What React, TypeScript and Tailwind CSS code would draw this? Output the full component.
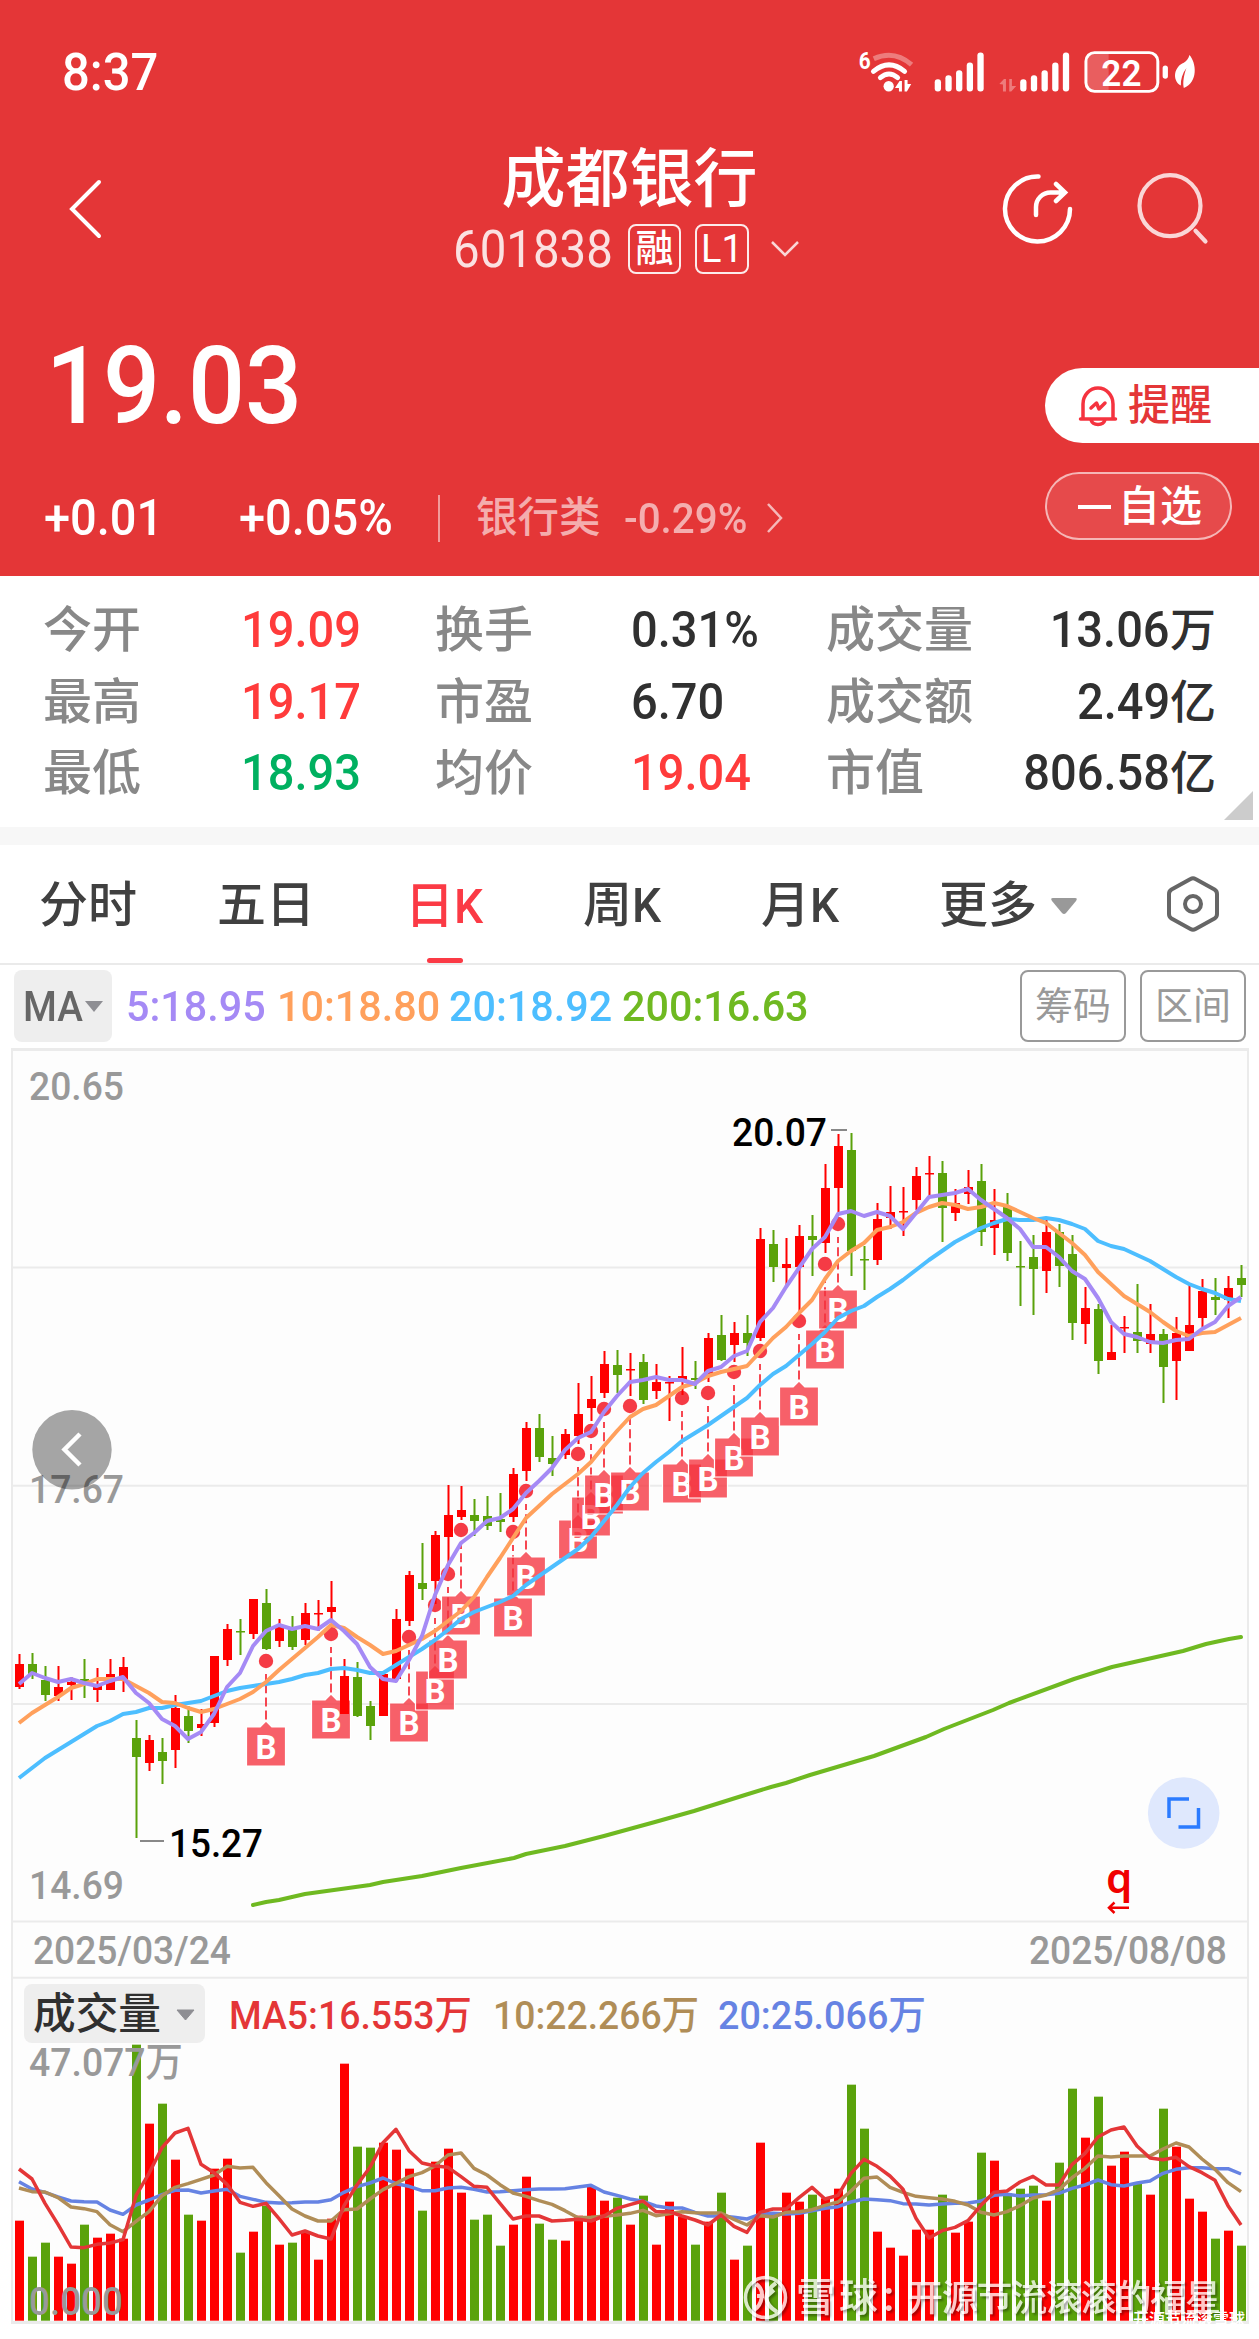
import { ReactNode } from "react";

const UP = "#ff0000";
const DOWN = "#5aa20b";

// direction, high, body top, body bottom, low
type Candle = [string, number, number, number, number];

const candles: Candle[] = [
  ["R", 1654, 1664, 1687, 1689], ["G", 1653, 1664, 1675, 1679], ["G", 1666, 1680, 1695, 1701],
  ["R", 1666, 1687, 1696, 1701], ["R", 1677, 1682, 1685, 1700], ["G", 1659, 1679, 1683, 1698],
  ["R", 1668, 1685, 1690, 1702], ["R", 1659, 1674, 1690, 1690], ["R", 1657, 1667, 1681, 1692],
  ["G", 1720, 1738, 1757, 1838], ["R", 1735, 1740, 1763, 1771], ["G", 1738, 1752, 1761, 1784],
  ["R", 1695, 1708, 1750, 1768], ["G", 1706, 1716, 1731, 1743], ["R", 1709, 1724, 1728, 1736],
  ["R", 1656, 1656, 1723, 1727], ["R", 1624, 1629, 1660, 1666], ["G", 1619, 1631, 1631, 1655],
  ["R", 1599, 1599, 1634, 1639], ["G", 1589, 1603, 1649, 1650], ["R", 1619, 1627, 1641, 1647],
  ["G", 1616, 1629, 1647, 1650], ["R", 1603, 1613, 1640, 1645], ["R", 1600, 1613, 1613, 1631],
  ["R", 1581, 1607, 1612, 1620], ["R", 1659, 1676, 1714, 1714], ["G", 1662, 1677, 1716, 1717],
  ["G", 1701, 1706, 1726, 1740], ["R", 1674, 1674, 1716, 1716], ["R", 1609, 1619, 1679, 1682],
  ["R", 1571, 1575, 1621, 1626], ["G", 1543, 1583, 1589, 1600], ["R", 1531, 1535, 1581, 1604],
  ["R", 1485, 1515, 1537, 1568], ["R", 1486, 1510, 1517, 1520], ["G", 1499, 1515, 1521, 1536],
  ["G", 1496, 1516, 1526, 1530], ["G", 1493, 1519, 1522, 1532], ["R", 1468, 1474, 1517, 1522],
  ["R", 1422, 1428, 1471, 1481], ["G", 1414, 1428, 1457, 1462], ["G", 1436, 1458, 1464, 1476],
  ["R", 1429, 1434, 1455, 1459], ["R", 1383, 1414, 1436, 1444], ["R", 1376, 1399, 1408, 1421],
  ["R", 1351, 1364, 1393, 1398], ["G", 1350, 1365, 1375, 1393], ["R", 1353, 1369, 1369, 1396],
  ["G", 1354, 1362, 1400, 1404], ["R", 1364, 1382, 1391, 1399], ["R", 1376, 1382, 1382, 1421],
  ["R", 1347, 1376, 1380, 1395], ["G", 1361, 1378, 1380, 1389], ["R", 1333, 1338, 1375, 1382],
  ["G", 1315, 1335, 1360, 1361], ["R", 1322, 1333, 1345, 1362], ["G", 1315, 1333, 1343, 1356],
  ["R", 1228, 1239, 1338, 1341], ["G", 1230, 1244, 1267, 1282], ["R", 1238, 1264, 1268, 1285],
  ["R", 1225, 1236, 1267, 1314], ["G", 1215, 1236, 1240, 1276], ["R", 1164, 1188, 1243, 1253],
  ["R", 1134, 1146, 1188, 1215], ["G", 1133, 1150, 1251, 1276], ["G", 1246, 1259, 1259, 1290],
  ["R", 1203, 1219, 1260, 1265], ["R", 1186, 1212, 1218, 1229], ["R", 1187, 1211, 1211, 1236],
  ["R", 1167, 1176, 1200, 1210], ["R", 1156, 1173, 1173, 1197], ["G", 1161, 1173, 1208, 1242],
  ["R", 1189, 1203, 1213, 1221], ["R", 1170, 1187, 1194, 1204], ["G", 1164, 1181, 1232, 1246],
  ["R", 1189, 1220, 1228, 1255], ["G", 1193, 1206, 1253, 1261], ["G", 1241, 1266, 1266, 1306],
  ["G", 1235, 1257, 1269, 1315], ["R", 1220, 1232, 1271, 1293], ["G", 1224, 1232, 1266, 1287],
  ["G", 1235, 1254, 1323, 1340], ["R", 1287, 1308, 1324, 1344], ["G", 1304, 1309, 1361, 1374],
  ["R", 1325, 1352, 1360, 1360], ["R", 1316, 1327, 1327, 1353], ["G", 1284, 1332, 1341, 1353],
  ["R", 1304, 1334, 1344, 1353], ["G", 1329, 1334, 1367, 1403], ["R", 1317, 1333, 1361, 1400],
  ["R", 1284, 1325, 1351, 1351], ["R", 1279, 1291, 1318, 1327], ["G", 1278, 1297, 1300, 1315],
  ["R", 1276, 1288, 1300, 1318], ["G", 1265, 1278, 1285, 1297],
];

const ma5 = [
  1684, 1673, 1678, 1682, 1679, 1683, 1686, 1681, 1677, 1693, 1703, 1719, 1726, 1739, 1732, 1714, 1687, 1673, 1646,
  1631, 1625, 1629, 1626, 1629, 1620, 1631, 1644, 1667, 1679, 1681, 1660, 1636, 1595, 1565, 1543, 1533, 1521, 1518,
  1509, 1493, 1481, 1468, 1450, 1438, 1432, 1412, 1396, 1382, 1380, 1377, 1380, 1380, 1384, 1371, 1367, 1356, 1351,
  1322, 1308, 1287, 1268, 1249, 1237, 1214, 1211, 1216, 1212, 1216, 1229, 1213, 1197, 1195, 1193, 1189, 1200, 1209,
  1218, 1229, 1247, 1247, 1257, 1271, 1279, 1298, 1322, 1334, 1337, 1342, 1343, 1340, 1339, 1329, 1322, 1306, 1297,
];
const ma10 = [
  1723, 1713, 1705, 1697, 1688, 1684, 1679, 1679, 1679, 1686, 1693, 1702, 1703, 1708, 1712, 1709, 1704, 1699, 1692,
  1682, 1670, 1659, 1648, 1637, 1625, 1628, 1637, 1645, 1654, 1651, 1645, 1639, 1631, 1621, 1611, 1597, 1577, 1558,
  1538, 1518, 1506, 1494, 1484, 1474, 1462, 1446, 1431, 1417, 1409, 1405, 1396, 1387, 1383, 1376, 1372, 1369, 1366,
  1352, 1338, 1327, 1313, 1300, 1279, 1261, 1251, 1243, 1230, 1227, 1222, 1213, 1207, 1203, 1205, 1209, 1207, 1203,
  1206, 1212, 1218, 1223, 1233, 1243, 1255, 1272, 1284, 1296, 1304, 1312, 1322, 1331, 1336, 1333, 1332, 1325, 1318,
];
const ma20 = [
  1778, 1768, 1758, 1750, 1742, 1734, 1726, 1721, 1714, 1712, 1708, 1708, 1705, 1703, 1701, 1696, 1691, 1688, 1686,
  1684, 1682, 1679, 1675, 1673, 1669, 1668, 1670, 1673, 1673, 1665, 1657, 1649, 1640, 1630, 1619, 1612, 1607, 1602,
  1596, 1585, 1576, 1567, 1558, 1549, 1537, 1521, 1505, 1487, 1473, 1462, 1452, 1441, 1433, 1425, 1416, 1407, 1398,
  1385, 1374, 1366, 1355, 1344, 1332, 1318, 1311, 1306, 1297, 1289, 1280, 1270, 1260, 1251, 1242, 1235, 1228, 1223,
  1219, 1220, 1220, 1218, 1220, 1224, 1229, 1241, 1246, 1249, 1255, 1261, 1269, 1277, 1284, 1289, 1293, 1299, 1301,
];
const ma200 =
  "253,1905 266,1902 279,1900 305,1894 370,1885 383,1882 422,1876 461,1868 514,1858 526,1854 565,1846 604,1836 655,1822 694,1811 745,1795 771,1787 786,1783 810,1775 874,1756 926,1737 944,1729 993,1710 1009,1703 1074,1679 1112,1667 1183,1651 1206,1644 1229,1639 1241,1637";

// candle index, y of the buy dot
const buys = [
  [19, 1661], [24, 1634], [30, 1637], [32, 1605], [33, 1574], [34, 1530], [38, 1532], [39, 1491], [43, 1454],
  [44, 1431], [45, 1409], [47, 1406], [51, 1398], [53, 1393], [55, 1372], [57, 1351], [60, 1321], [62, 1264], [63, 1224],
];

// volume pane values are thirds of a pixel below y=1960
const volumes = [
  782, 890, 848, 890, 911, 794, 833, 821, 836, 254, 491, 431, 599, 764, 782, 626, 596, 878, 815, 738, 854, 848, 815,
  899, 776, 311, 560, 563, 548, 569, 626, 752, 605, 566, 698, 779, 764, 857, 794, 650, 791, 839, 842, 767, 680, 722,
  713, 794, 707, 854, 725, 770, 854, 785, 698, 899, 857, 548, 758, 698, 725, 704, 715, 686, 374, 506, 815, 863, 887,
  809, 809, 704, 818, 785, 578, 602, 700, 686, 677, 722, 608, 386, 533, 410, 617, 575, 668, 704, 446, 560, 716, 755,
  836, 812, 857,
];
const vol5 = [
  627, 657, 730, 793, 861, 863, 853, 849, 839, 707, 640, 563, 519, 505, 613, 638, 673, 727, 739, 730, 776, 825, 813,
  828, 837, 737, 675, 622, 548, 508, 572, 609, 618, 622, 650, 679, 682, 730, 777, 768, 768, 783, 781, 778, 783, 768,
  745, 734, 723, 755, 755, 768, 780, 795, 765, 799, 817, 757, 747, 747, 713, 682, 717, 706, 640, 598, 619, 648, 688,
  775, 834, 812, 802, 782, 736, 697, 693, 666, 649, 675, 675, 614, 580, 531, 510, 501, 558, 594, 599, 592, 620, 638,
  661, 737, 795,
];
const vol10 = [
  684, 695, 696, 713, 741, 746, 755, 794, 815, 784, 755, 707, 682, 671, 658, 645, 619, 624, 622, 668, 707, 747, 768,
  783, 783, 749, 747, 717, 689, 670, 650, 638, 618, 585, 579, 625, 645, 674, 699, 709, 722, 733, 752, 773, 772, 769,
  765, 760, 751, 767, 761, 755, 758, 759, 759, 778, 795, 767, 771, 757, 755, 749, 736, 726, 693, 655, 651, 682, 697,
  709, 713, 717, 724, 735, 757, 765, 755, 737, 714, 705, 689, 653, 625, 588, 591, 588, 588, 588, 567, 549, 561, 597,
  628, 668, 695,
];
const vol20 = [
  665, 687, 697, 711, 723, 725, 726, 750, 763, 735, 720, 704, 691, 690, 699, 693, 688, 709, 718, 727, 729, 728, 726,
  726, 719, 697, 680, 669, 654, 671, 679, 692, 692, 684, 682, 688, 696, 695, 692, 689, 687, 687, 686, 681, 676, 696,
  706, 717, 724, 738, 744, 744, 757, 768, 768, 772, 777, 763, 760, 762, 760, 752, 745, 740, 726, 717, 719, 722, 731,
  732, 735, 732, 730, 729, 723, 706, 703, 708, 705, 704, 700, 685, 675, 660, 674, 678, 669, 663, 640, 628, 623, 623,
  626, 626, 642,
];

const stats = [
  ["今开", "19.09", "text-[#ff3b3b]", "换手", "0.31%", "text-[#303030]", "成交量", "13.06", "万"],
  ["最高", "19.17", "text-[#ff3b3b]", "市盈", "6.70", "text-[#303030]", "成交额", "2.49", "亿"],
  ["最低", "18.93", "text-[#00b060]", "均价", "19.04", "text-[#ff3b3b]", "市值", "806.58", "亿"],
];

const xAt = (i: number) => 19 + i * 13;
const volY = (v: number) => 1960 + v / 3;
const pricePoints = (ys: number[]) => ys.map((y, i) => `${xAt(i)},${y}`).join(" ");
const volumePoints = (vs: number[]) => vs.map((v, i) => `${xAt(i)},${volY(v)}`).join(" ");

function StatusIcons() {
  const tops = [148, 136, 121, 97, 67];
  return (
    <svg width="367" height="53" viewBox="0 47.5 1100 160" fill="white">
      <text x="53" y="118" fontSize="74" fontWeight="700" textLength="36" lengthAdjust="spacingAndGlyphs">
        6
      </text>
      <g fill="none" stroke="white" strokeWidth="15" strokeLinecap="round">
        <path d="M98 86Q160 58 212 104" opacity="0.35" strokeLinecap="butt" />
        <path d="M97 124Q144 85 191 124" />
        <path d="M118 143Q144 121 170 143" />
      </g>
      <circle cx="143" cy="169" r="15.500" />
      <path d="M176 153L183 153V185H174V174H162ZM191 150H200V162H211L198 185H191Z" />
      <path d="M477 162L491 147H497V185H488V164ZM507 147H515V168H528L513 185H507Z" opacity="0.35" />
      {tops.map((top, i) => (
        <g key={top}>
          <rect x={282 + i * 32.2} y={top} width="19" height={185 - top} rx="9" />
          <rect x={540 + i * 32.2} y={top} width="19" height={185 - top} rx="9" />
        </g>
      ))}
      <path d="M742 90Q742 70 764 70H807V182H764Q742 182 742 162Z" opacity="0.2" />
      <rect x="738.500" y="67.500" width="217" height="117" rx="26" fill="none" stroke="white" strokeWidth="9" />
      <text x="785" y="168" fontSize="112" fontWeight="600" textLength="121" lengthAdjust="spacingAndGlyphs">
        22
      </text>
      <rect x="970" y="106" width="16" height="40" rx="8" />
      <path d="M1051 75C1072 98 1078 158 1034 174C1030 160 1034 134 1042 114C1030 130 1024 148 1025 167C996 150 1006 108 1034 98C1043 93 1048 86 1051 75Z" />
    </svg>
  );
}

function Header() {
  return (
    <header className="h-[576px] bg-[#e43637] text-white">
      <div className="flex h-[145px] items-center justify-between pr-[52px] pl-[62px]">
        <span className="origin-left scale-x-[0.96] pt-[2px] text-[51px]">8:37</span>
        <StatusIcons />
      </div>

      <div className="flex h-[145px]">
        <div className="w-[400px] pt-[34px] pl-[68px]">
          <svg width="36" height="60" viewBox="0 0 36 60" fill="none" stroke="white" strokeWidth="4" strokeLinecap="round">
            <path d="M31 3L4 30L31 57" />
          </svg>
        </div>
        <div className="flex flex-1 flex-col items-center">
          <h1 className="h-[66px] text-[64px] leading-[70px]">成都银行</h1>
          <div className="mt-[13px] mr-[5px] flex h-[50px] items-center">
            <span className="w-[158px] pt-[2px] text-white/85">
              <span className="inline-block origin-left scale-x-[0.93] text-[51px] leading-[50px] font-normal">601838</span>
            </span>
            <span className="ml-[17px] flex h-[50px] w-[53px] items-center justify-center rounded-lg border-2 border-white/90 pb-[2px] text-[38px]">
              融
            </span>
            <span className="ml-[14px] flex h-[50px] w-[54px] items-center justify-center rounded-lg border-2 border-white/90 text-[38px] font-normal">
              L1
            </span>
            <svg className="ml-[20px]" width="32" height="20" viewBox="0 0 32 20" fill="none" stroke="white" strokeOpacity="0.8" strokeWidth="2.500">
              <path d="M3 3L16 16L29 3" />
            </svg>
          </div>
        </div>
        <div className="flex w-[400px] gap-[60px] pt-[26px] pl-[142px]">
          <svg width="75" height="75" viewBox="-37 -37 75 75" fill="none" stroke="white" strokeWidth="4.500" strokeLinecap="round">
            <path d="M0.500 -31.500A32.500 32.500 0 1 0 32 1M-2 7V-1A14.500 14.500 0 0 1 12.500 -15.500H26M18 -24L27 -15.500L18 -7" />
          </svg>
          <svg width="75" height="75" viewBox="0 0 75 75" fill="none" stroke="white" strokeOpacity="0.8" strokeWidth="4.200" strokeLinecap="round">
            <circle cx="34" cy="34.700" r="30.500" />
            <path d="M59.500 59.700L69.500 70.500" />
          </svg>
        </div>
      </div>

      <div className="flex justify-between">
        <div className="pt-[46px] pl-[44px]">
          <p className="origin-left scale-x-[0.93] pl-[2px] text-[108px] leading-[100px]">19.03</p>
          <div className="mt-[57px] flex h-[50px] items-center">
            <span className="w-[195px]">
              <span className="inline-block origin-left scale-x-[0.94] text-[50px]">+0.01</span>
            </span>
            <span className="w-[199px]">
              <span className="inline-block origin-left scale-x-[0.94] text-[50px]">+0.05%</span>
            </span>
            <span className="h-[47px] w-[2px] bg-white/50" />
            <span className="ml-[36px] text-[41.500px] text-white/60">银行类</span>
            <span className="ml-[23px] w-[141px] text-white/60">
              <span className="inline-block origin-left scale-x-[0.96] text-[42px]">-0.29%</span>
            </span>
            <svg width="20" height="32" viewBox="0 0 20 32" fill="none" stroke="white" strokeOpacity="0.65" strokeWidth="2.500">
              <path d="M3 2L16 16L3 30" />
            </svg>
          </div>
        </div>
        <div className="flex w-[214px] flex-col gap-[29px] pt-[78px]">
          <button className="flex h-[75px] items-center rounded-l-full bg-white pl-[33px] text-[#e43637]">
            <svg width="40" height="42" viewBox="0 0 40 42" fill="none" stroke="#f5333f" strokeWidth="3.500" strokeLinejoin="round" strokeLinecap="round">
              <path d="M2.500 34H37.500M5 33V19A15 16 0 0 1 35 19V33M13 35C15 41 25 41 27 35M13 23L18.500 18L21 24L27 18" />
            </svg>
            <span className="ml-[10px] text-[42px]">提醒</span>
          </button>
          <button className="flex h-[68px] w-[187px] items-center rounded-full border-2 border-white/60 bg-white/10 pl-[31px]">
            <span className="mt-[2px] h-[4px] w-[33px] bg-white" />
            <span className="ml-[7px] text-[42px]">自选</span>
          </button>
        </div>
      </div>
    </header>
  );
}

function Num({ children }: { children: ReactNode }) {
  return <span className="inline-block origin-left scale-x-[0.94]">{children}</span>;
}

function Stats() {
  return (
    <section className="relative h-[251px] bg-white pt-[19px]">
      {stats.map(([l1, v1, c1, l2, v2, c2, l3, v3, unit]) => (
        <div
          key={l1}
          className="grid h-[71.500px] grid-cols-[198px_194px_196px_195px_auto_1fr] items-center pr-[43px] pl-[43px] text-[50px] leading-[71px] text-[#303030]"
        >
          <span className="text-[49px] text-[#888]">{l1}</span>
          <span className={c1}>
            <Num>{v1}</Num>
          </span>
          <span className="text-[49px] text-[#888]">{l2}</span>
          <span className={c2}>
            <Num>{v2}</Num>
          </span>
          <span className="text-[49px] whitespace-nowrap text-[#888]">{l3}</span>
          <span className="flex items-center justify-end">
            <span className="origin-right scale-x-[0.94]">{v3}</span>
            <span className="text-[46px]">{unit}</span>
          </span>
        </div>
      ))}
      <svg className="absolute right-[6px] bottom-[7px]" width="29" height="29" viewBox="0 0 29 29">
        <path d="M29 0V29H0Z" fill="#ccc" />
      </svg>
    </section>
  );
}

function Tabs() {
  return (
    <nav className="flex h-[120px] items-center border-b-2 border-[#eaeaea] bg-white pl-[39px] text-[49px] text-[#404040]">
      <span className="w-[178px] pt-1">分时</span>
      <span className="w-[188px] pt-1">五日</span>
      <span className="flex h-full w-[178px] flex-col justify-between text-[#fb3a45]">
        <span className="pt-[25px]">
          日<Num>K</Num>
        </span>
        <span className="ml-[22px] h-[5px] w-[36px] rounded-full bg-[#fb3a45]" />
      </span>
      <span className="w-[178px] pt-1">
        周<Num>K</Num>
      </span>
      <span className="w-[178px] pt-1">
        月<Num>K</Num>
      </span>
      <span className="pt-1">更多</span>
      <svg className="mt-1 ml-[14px]" width="26" height="16" viewBox="0 0 26 16">
        <path d="M2 0H24Q27 0 25 3L15 15Q13 17 11 15L1 3Q-1 0 2 0Z" fill="#999" />
      </svg>
      <svg className="ml-[90px]" width="52" height="56" viewBox="0 0 52 56" fill="none" stroke="#666" strokeWidth="4" strokeLinejoin="round">
        <path d="M23.500 3Q26 1.500 28.500 3L47.500 13.500Q50 15 50 18V38Q50 41 47.500 42.500L28.500 53Q26 54.500 23.500 53L4.500 42.500Q2 41 2 38V18Q2 15 4.500 13.500Z" />
        <circle cx="26" cy="28" r="8" />
      </svg>
    </nav>
  );
}

function MaBar() {
  return (
    <div className="flex h-[80px] items-center bg-white pt-[2px] pr-[13px] pl-[14px] text-[43px]">
      <span className="flex h-[72px] w-[98px] items-center rounded-lg bg-[#eee] pl-[9px] text-[#666]">
        <span className="w-[62px]">
          <span className="inline-block origin-left scale-x-[0.9]">MA</span>
        </span>
        <svg width="18" height="11" viewBox="0 0 18 11">
          <path d="M0 0H18L9 11Z" fill="#8e8e93" />
        </svg>
      </span>
      <span className="ml-[14px] w-[151px] text-[#a58af5]">
        <span className="inline-block origin-left scale-x-[0.96]">5:18.95</span>
      </span>
      <span className="w-[172px] text-[#ffa05c]">
        <span className="inline-block origin-left scale-x-[0.96]">10:18.80</span>
      </span>
      <span className="w-[173px] text-[#4dbeff]">
        <span className="inline-block origin-left scale-x-[0.96]">20:18.92</span>
      </span>
      <span className="flex-1 text-[#6fb921]">
        <span className="inline-block origin-left scale-x-[0.96]">200:16.63</span>
      </span>
      <button className="h-[72px] w-[106px] rounded-lg border-2 border-[#999] text-[38px] font-normal text-[#999]">筹码</button>
      <button className="ml-[14px] h-[72px] w-[106px] rounded-lg border-2 border-[#999] text-[38px] font-normal text-[#999]">
        区间
      </button>
    </div>
  );
}

function Label({ x, y, w, fill = "#999", size = 39.5, children }: { x: number; y: number; w: number; fill?: string; size?: number; children: string }) {
  return (
    <text x={x} y={y} fill={fill} fontSize={size} textLength={w} lengthAdjust="spacingAndGlyphs">
      {children}
    </text>
  );
}

function Chart() {
  return (
    <svg className="block" width="1259" height="1294" viewBox="0 1045 1259 1294">
      <rect x="12" y="1049" width="1236" height="1273" fill="#fdfdfd" stroke="#ebebeb" strokeWidth="2" />
      <path d="M11 1049.500H1249M11 2322.500H1249" stroke="#ebebeb" strokeWidth="3" />
      <path d="M12 1267.500H1248M12 1485.700H1248M12 1704H1248M12 1921.500H1248M12 1977.700H1248" stroke="#ebebeb" strokeWidth="2" />

      <Label x={29} y={1100} w={95}>20.65</Label>
      <Label x={29} y={1503} w={95}>17.67</Label>
      <Label x={29} y={1899} w={95}>14.69</Label>
      <Label x={33} y={1964} w={198}>2025/03/24</Label>
      <Label x={1029} y={1964} w={198}>2025/08/08</Label>

      {buys.map(([i, y]) => (
        <g key={i} transform={`translate(${xAt(i)} ${y})`}>
          <path d="M0 13V60" stroke="#f5333f" strokeWidth="1.800" strokeDasharray="9 4.200" strokeDashoffset="3" />
          <path d="M-19.500 66H-6L0 60L6 66H19.500V105H-19.500Z" fill="#f5333f" fillOpacity="0.78" stroke="white" strokeWidth="1.200" strokeLinejoin="round" />
          <text x="0" y="97.500" textAnchor="middle" fontSize="33" fontWeight="700" fill="white">
            B
          </text>
          <circle r="7.200" fill="#f53b45" />
        </g>
      ))}

      {candles.map(([dir, high, top, bottom, low], i) => {
        const x = xAt(i) + 0.5;
        const color = dir === "R" ? UP : DOWN;
        return (
          <g key={i} fill={color}>
            <rect x={x - 1} y={high} width="2" height={low - high} />
            <rect x={x - 4.5} y={top} width="9" height={Math.max(bottom - top, 1.5)} />
          </g>
        );
      })}

      <g fill="none" strokeWidth="4" strokeLinejoin="round">
        <polyline points={pricePoints(ma20)} stroke="#4dbeff" />
        <polyline points={pricePoints(ma10)} stroke="#ffa05c" />
        <polyline points={pricePoints(ma5)} stroke="#a58af5" />
        <polyline points={ma200} stroke="#6fb921" strokeLinecap="round" />
      </g>

      <path d="M140 1841H164M831 1130H847" stroke="#888" strokeWidth="2" />
      <Label x={169} y={1857} w={94} fill="#000">15.27</Label>
      <Label x={732} y={1146} w={95} fill="#000">20.07</Label>

      <circle cx="72" cy="1449.700" r="39.700" fill="black" fillOpacity="0.35" />
      <path d="M80 1434L64.500 1449.500L80 1465" fill="none" stroke="white" strokeWidth="4.500" />

      <circle cx="1183.700" cy="1813" r="35.800" fill="#dfe8fd" />
      <path d="M1169 1818V1799H1189M1178.500 1827H1198.500V1808" fill="none" stroke="#2b7bff" strokeWidth="3.500" />
      <text x="1106" y="1893" fontSize="42" fontWeight="600" fill="#f00000" fontFamily="Noto Sans">
        q
      </text>
      <path d="M1129 1907.700H1109M1114.500 1902.500L1109 1907.700L1114.500 1913" fill="none" stroke="#f00000" strokeWidth="2.500" />

      <rect x="24" y="1984" width="181" height="59" rx="8" fill="#eee" />
      <Label x={33} y={2029} w={128} size={43} fill="#303030">成交量</Label>
      <path d="M177 2010H194L185.500 2020Z" fill="#8e8e93" stroke="#8e8e93" strokeLinejoin="round" />
      <Label x={229} y={2029} w={243} fill="#e43637">MA5:16.553万</Label>
      <Label x={493} y={2029} w={206} fill="#b08d57">10:22.266万</Label>
      <Label x={718} y={2029} w={208} fill="#6683e3">20:25.066万</Label>

      {volumes.map((v, i) => (
        <rect key={i} x={xAt(i) - 4} y={volY(v)} width="9" height={2320.7 - volY(v)} fill={candles[i][0] === "R" ? UP : DOWN} />
      ))}
      <g fill="none" strokeWidth="3.500" strokeLinejoin="round">
        <polyline points={volumePoints(vol20)} stroke="#6683e3" />
        <polyline points={volumePoints(vol10)} stroke="#b08d57" />
        <polyline points={volumePoints(vol5)} stroke="#e43637" />
      </g>
      <Label x={29} y={2076} w={154}>47.077万</Label>
      <Label x={29} y={2315} w={94}>0.000</Label>

      <g className="[filter:drop-shadow(2px_2px_1px_rgba(0,0,0,0.45))]" fill="white" opacity="0.78">
        <circle cx="765.500" cy="2297.500" r="20" fill="none" stroke="white" strokeWidth="3.500" />
        <path d="M756 2284C766 2290 762 2305 754 2310M776 2283C762 2293 764 2304 777 2312M757 2296H764M766 2297L774 2290" fill="none" stroke="white" strokeWidth="4" />
        <text x="796" y="2311" fontSize="39" textLength="82">雪球</text>
        <text x="880" y="2311" fontSize="35">：</text>
        <text x="907" y="2311" fontSize="36" textLength="314">开源节流滚滚的福星</text>
      </g>
      <text x="1133" y="2325" fontSize="16" fill="white" textLength="112">
        开源节流滚雪球
      </text>
    </svg>
  );
}

export default function App() {
  return (
    <main className="w-[1259px] bg-white font-['Roboto','Noto_Sans_CJK_SC',sans-serif] font-medium">
      <Header />
      <Stats />
      <div className="h-[18px] bg-[#f7f7f7]" />
      <Tabs />
      <MaBar />
      <Chart />
    </main>
  );
}
